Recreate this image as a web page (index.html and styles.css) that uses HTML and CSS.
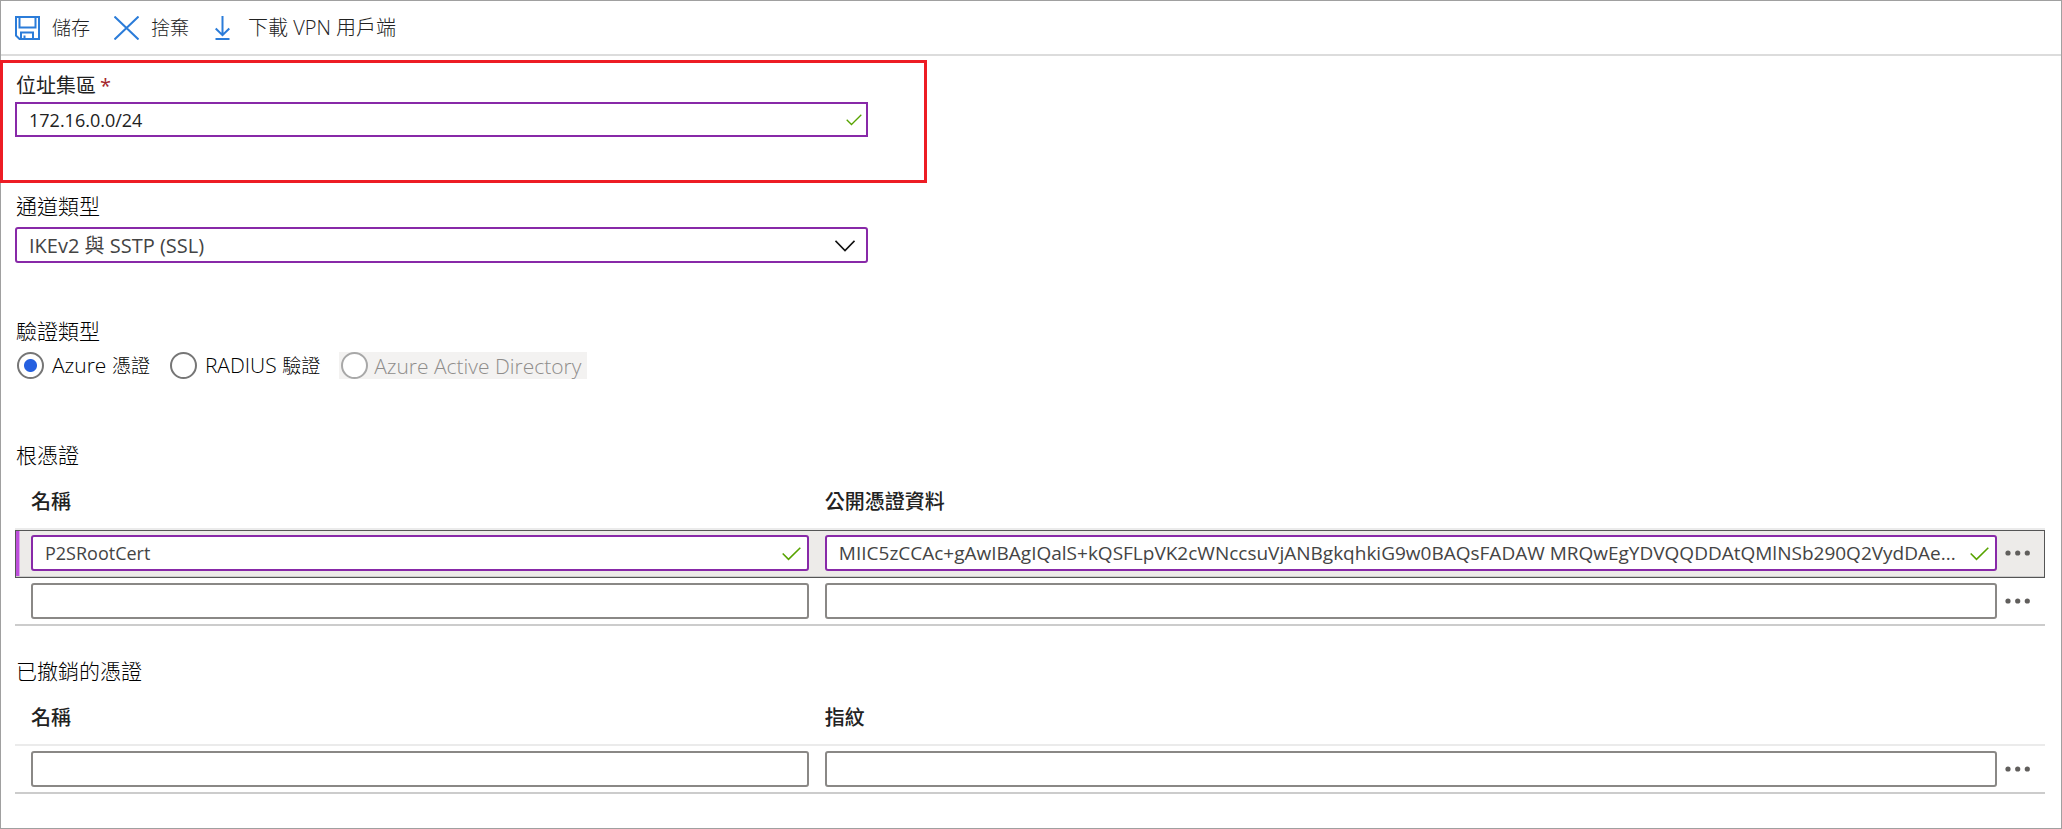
FILE: index.html
```html
<!DOCTYPE html>
<html lang="zh-Hant">
<head>
<meta charset="utf-8">
<title>VPN 點對站設定</title>
<link rel="stylesheet" href="styles.css">
</head>
<body>
<main class="blade">
  <div class="toolbar" role="toolbar">
    <button type="button" class="command">
      <svg class="icon-save" width="25" height="24" viewBox="0 0 25 24" aria-hidden="true"><path d="M1 1H24V23H4.500L1 19.500Z M4.500 1V11.500H20.500V1 M6 23V16.500H18V23 M9.500 23V19.500" /></svg>
      <span>儲存</span>
    </button>
    <button type="button" class="command">
      <svg width="25" height="24" viewBox="0 0 25 24" aria-hidden="true"><path d="M.5 .5L24.500 23.500M24.500 .5L.5 23.500" /></svg>
      <span>捨棄</span>
    </button>
    <button type="button" class="command command-download">
      <svg width="15" height="24" viewBox="0 0 15 24" aria-hidden="true"><path d="M7.500 0V19M.7 12.500L7.500 19.200L14.300 12.500M.5 23H14.500" /></svg>
      <span>下載 VPN 用戶端</span>
    </button>
  </div>

  <section class="column highlight">
    <label class="label label-required" for="pool">位址集區<span class="required">*</span></label>
    <div class="control">
      <input class="textbox textbox-square valid" id="pool" type="text" value="172.16.0.0/24">
      <svg class="check check-small" width="16" height="12" viewBox="0 0 16 12" aria-hidden="true"><path d="M.7 5.700L5.500 10.500L15.300 .7" /></svg>
    </div>
  </section>

  <section class="column tunnel">
    <label class="label" for="tunnel">通道類型</label>
    <div class="control">
      <select class="textbox valid" id="tunnel"><option>IKEv2 與 SSTP (SSL)</option></select>
      <svg class="chevron" width="20" height="12" viewBox="0 0 20 12" aria-hidden="true"><path d="M.5 .8L10 10.500L19.500 .8" /></svg>
    </div>
  </section>

  <fieldset class="auth">
    <legend class="label">驗證類型</legend>
    <div class="radios">
      <label class="radio"><input type="radio" name="auth" checked><span>Azure <span class="cjk">憑證</span></span></label>
      <label class="radio"><input type="radio" name="auth"><span>RADIUS <span class="cjk">驗證</span></span></label>
      <label class="radio radio-disabled"><input type="radio" name="auth" disabled><span>Azure Active Directory</span></label>
    </div>
  </fieldset>

  <section class="certs">
    <h2 class="title">根憑證</h2>
    <table class="grid">
      <colgroup><col class="col-name"><col><col class="col-menu"></colgroup>
      <thead><tr><th scope="col">名稱</th><th scope="col">公開憑證資料</th><th></th></tr></thead>
      <tbody>
        <tr class="selected">
          <td><div class="control">
            <input class="textbox valid" type="text" aria-label="名稱" value="P2SRootCert">
            <svg class="check" width="19" height="14" viewBox="0 0 19 14" aria-hidden="true"><path d="M.7 6.500L6.500 12.300L18.300 .7" /></svg>
          </div></td>
          <td><div class="control">
            <input class="textbox textbox-data valid" type="text" aria-label="公開憑證資料" value="MIIC5zCCAc+gAwIBAgIQalS+kQSFLpVK2cWNccsuVjANBgkqhkiG9w0BAQsFADAW MRQwEgYDVQQDDAtQMlNSb290Q2VydDAe...">
            <svg class="check" width="19" height="14" viewBox="0 0 19 14" aria-hidden="true"><path d="M.7 6.500L6.500 12.300L18.300 .7" /></svg>
          </div></td>
          <td><button type="button" class="menu" aria-label="更多"><svg width="26" height="6" viewBox="0 0 26 6" aria-hidden="true"><circle cx="3" cy="3" r="2.600"/><circle cx="12.700" cy="3" r="2.600"/><circle cx="22.300" cy="3" r="2.600"/></svg></button></td>
        </tr>
        <tr>
          <td><input class="textbox" type="text" aria-label="名稱"></td>
          <td><input class="textbox" type="text" aria-label="公開憑證資料"></td>
          <td><button type="button" class="menu" aria-label="更多"><svg width="26" height="6" viewBox="0 0 26 6" aria-hidden="true"><circle cx="3" cy="3" r="2.600"/><circle cx="12.700" cy="3" r="2.600"/><circle cx="22.300" cy="3" r="2.600"/></svg></button></td>
        </tr>
      </tbody>
    </table>
  </section>

  <section class="certs">
    <h2 class="title">已撤銷的憑證</h2>
    <table class="grid">
      <colgroup><col class="col-name"><col><col class="col-menu"></colgroup>
      <thead><tr><th scope="col">名稱</th><th scope="col">指紋</th><th></th></tr></thead>
      <tbody>
        <tr>
          <td><input class="textbox" type="text" aria-label="名稱"></td>
          <td><input class="textbox" type="text" aria-label="指紋"></td>
          <td><button type="button" class="menu" aria-label="更多"><svg width="26" height="6" viewBox="0 0 26 6" aria-hidden="true"><circle cx="3" cy="3" r="2.600"/><circle cx="12.700" cy="3" r="2.600"/><circle cx="22.300" cy="3" r="2.600"/></svg></button></td>
        </tr>
      </tbody>
    </table>
  </section>
</main>
</body>
</html>
```
FILE: styles.css
```css
* {
  box-sizing: border-box;
}

body {
  margin: 0;
  background: #fff;
  color: #000;
  font-family: "Open Sans", "Noto Sans CJK TC", sans-serif;
  font-size: 18px;
  font-weight: 300;
}

.blade {
  min-height: 100vh;
  border: 1px solid #a0a0a0;
}

button,
input,
select {
  font: inherit;
  color: inherit;
}

svg {
  display: block;
  flex: none;
  fill: none;
}

.toolbar {
  display: flex;
  align-items: center;
  gap: 24px;
  height: 55px;
  padding: 0 14px;
  border-bottom: 2px solid #dcdcdc;
}

.command {
  display: flex;
  align-items: center;
  gap: 12px;
  padding: 0;
  border: 0;
  background: none;
  color: #222;
  font-size: 19px;
  line-height: 28px;
}

.command-download {
  gap: 18px;
  margin-left: 2px;
  font-size: 20px;
}

.command svg {
  stroke: #2b7cd9;
  stroke-width: 2;
}

.column {
  width: 45%;
  padding: 0 60px 0 14px;
}

.label {
  display: block;
  padding: 0 1px;
  font-size: 21px;
  line-height: 30px;
}

.label-required {
  color: #222;
  font-size: 20px;
  font-weight: 400;
  line-height: 32px;
}

.required {
  margin-left: 4px;
  color: #a4262c;
}

.highlight {
  margin: 4px 0 0 -1px;
  padding: 7px 56px 43px 12px;
  border: 3px solid #ed1c24;
}

.control {
  position: relative;
}

.textbox {
  display: block;
  width: 100%;
  height: 36px;
  margin: 0;
  padding: 0 12px;
  border: 2px solid #8a8886;
  border-radius: 3px;
  background: #fff;
  color: #444;
  font-weight: 400;
  appearance: none;
  outline: 0;
}

.valid {
  border-color: #8829a8;
}

.textbox-square {
  height: 35px;
  border-radius: 0;
  color: #222;
}

.textbox-data {
  font-size: 19px;
}

select.textbox {
  font-size: 20px;
}

.check {
  position: absolute;
  top: 12px;
  right: 8px;
  stroke: #57a300;
  stroke-width: 1.6;
}

.check-small {
  right: 6px;
  stroke-width: 1.3;
}

.chevron {
  position: absolute;
  top: 13px;
  right: 13px;
  stroke: #111;
  stroke-width: 1.6;
  pointer-events: none;
}

.tunnel {
  padding-top: 8px;
}

.tunnel .label {
  padding-bottom: 6px;
}

.auth {
  margin: 0;
  padding: 47px 15px 0;
  border: 0;
}

.auth .label {
  float: left;
  padding: 0;
  line-height: 42px;
}

.radios {
  display: flex;
  clear: both;
  gap: 19px;
}

.radio {
  display: flex;
  align-items: center;
  gap: 8px;
  padding-left: 1px;
  font-size: 21px;
  line-height: 26px;
}

.cjk {
  font-size: 19px;
}

.radio input {
  width: 27px;
  height: 27px;
  margin: 0;
  border: 2px solid #767676;
  border-radius: 50%;
  background: #fff;
  appearance: none;
}

.radio input:checked {
  background: radial-gradient(circle, #2560e0 6px, #fff 7px);
}

.radio-disabled {
  gap: 6px;
  padding: 0 6px 0 2px;
  background: #f3f2f1;
  color: #8f8d8b;
}

.radio-disabled input {
  border-color: #a8a8a8;
}

.certs {
  padding: 0 16px 28px 14px;
}

.auth + .certs {
  padding-top: 59px;
}

.title {
  margin: 0;
  padding: 0 1px;
  font-size: 21px;
  font-weight: 300;
  line-height: 34px;
}

.grid {
  width: 100%;
  border-spacing: 0;
  table-layout: fixed;
}

.col-name {
  width: 39.5%;
}

.col-menu {
  width: 48px;
}

.grid th {
  height: 58px;
  padding: 0 8px;
  border-bottom: 2px solid #ebebeb;
  color: #222;
  font-size: 20px;
  font-weight: 500;
  text-align: left;
}

.grid td {
  padding: 5px 8px;
  border-bottom: 2px solid #ccc;
}

.grid th:first-child,
.grid td:first-child {
  padding-left: 16px;
}

.grid td:nth-child(2) {
  padding-right: 0;
}

.selected {
  background: #edebe9;
  outline: 1px solid #555;
  outline-offset: -1px;
}

.selected td:first-child {
  box-shadow: inset 4px 0 #bd4fdb, inset 5px 0 #dca6ea;
}

.grid .control .textbox {
  padding-right: 26px;
}

.menu {
  display: flex;
  align-items: center;
  height: 32px;
  padding: 0;
  border: 0;
  background: none;
}

.menu svg {
  fill: #605e5c;
}
```
